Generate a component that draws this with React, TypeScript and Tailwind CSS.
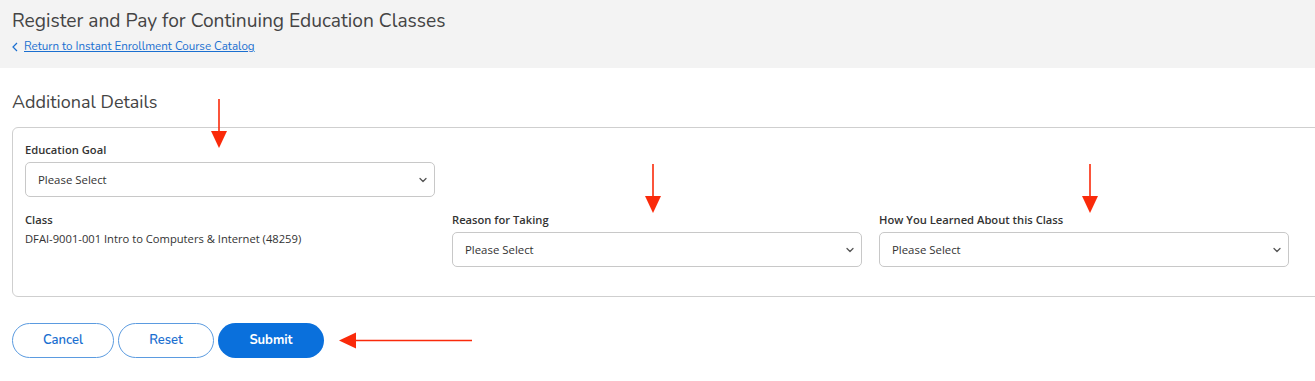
import React from 'react';

const heading = { fontFamily: '"Nunito", "Lato", "Open Sans", sans-serif' };

const Chevron: React.FC = () => (
  <svg className="w-[10px] h-[10px] text-[#555]" viewBox="0 0 10 10" fill="none" stroke="currentColor" strokeWidth={1.3}>
    <path d="M2 3.5l3 3 3-3" strokeLinecap="round" strokeLinejoin="round" />
  </svg>
);

const SelectBox: React.FC = () => (
  <div className="flex items-center justify-between w-[410px] h-[35px] border border-[#c8c8c8] rounded-[5px] bg-white pl-[12px] pr-[6px] text-[11.4px] text-[#333]">
    <span>Please Select</span>
    <Chevron />
  </div>
);

const Field: React.FC<{ label: string; children: React.ReactNode }> = ({ label, children }) => (
  <div className="flex flex-col w-[410px]">
    <label className="text-[11.2px] font-semibold text-[#333] leading-[16px] mb-[4px]">{label}</label>
    {children}
  </div>
);

const DownArrow: React.FC<{ className: string }> = ({ className }) => (
  <svg className={`absolute ${className}`} width="20" height="50" viewBox="0 0 20 50">
    <line x1="10" y1="0" x2="10" y2="36" stroke="#fa2a0a" strokeWidth="1.6" />
    <polygon points="2,32 18,32 10,49" fill="#fa2a0a" />
  </svg>
);

const App: React.FC = () => {
  return (
    <div className="relative w-[1315px] h-[381px] bg-white overflow-hidden" style={{ fontFamily: '"Open Sans", sans-serif' }}>
      <div className="bg-[#f3f3f3] h-[68px] px-[12px] pt-[8px]">
        <h1 className="text-[19.2px] leading-[26px] text-[#444]" style={heading}>
          Register and Pay for Continuing Education Classes
        </h1>
        <div className="flex items-center gap-[6px] mt-[5px]">
          <svg className="w-[6px] h-[10px] text-[#1a6fd0]" viewBox="0 0 6 10" fill="none" stroke="currentColor" strokeWidth={1.2}>
            <path d="M5 1L1 5l4 4" />
          </svg>
          <a href="#" className="text-[11.6px] leading-[15px] text-[#1a6fd0] underline" style={heading}>
            Return to Instant Enrollment Course Catalog
          </a>
        </div>
      </div>

      <div className="px-[12px]">
        <h2 className="text-[18px] leading-[24px] text-[#444] mt-[22px]" style={heading}>
          Additional Details
        </h2>
        <div className="mt-[13px] w-[1330px] h-[170px] border border-[#cfcfcf] rounded-[6px] px-[12px] pt-[14px]">
          <Field label="Education Goal">
            <SelectBox />
          </Field>
          <div className="flex gap-[17px] mt-[15px]">
            <div className="flex flex-col w-[410px]">
              <label className="text-[11.2px] font-semibold text-[#333] leading-[16px]">Class</label>
              <span className="text-[11.2px] text-[#333] leading-[16px] mt-[3px]">
                DFAI-9001-001 Intro to Computers &amp; Internet (48259)
              </span>
            </div>
            <Field label="Reason for Taking">
              <SelectBox />
            </Field>
            <Field label="How You Learned About this Class">
              <SelectBox />
            </Field>
          </div>
        </div>

        <div className="flex gap-[4px] mt-[26px]">
          <button className="w-[102px] h-[35px] rounded-full border border-[#5b9be0] text-[#1a6fd0] text-[13px] font-semibold" style={heading}>
            Cancel
          </button>
          <button className="w-[96px] h-[35px] rounded-full border border-[#5b9be0] text-[#1a6fd0] text-[13px] font-semibold" style={heading}>
            Reset
          </button>
          <button className="w-[106px] h-[35px] rounded-full bg-[#0a70dc] text-white text-[13px] font-bold" style={heading}>
            Submit
          </button>
        </div>
      </div>

      <DownArrow className="left-[209px] top-[99px]" />
      <DownArrow className="left-[643px] top-[164px]" />
      <DownArrow className="left-[1080px] top-[164px]" />
      <svg className="absolute left-[338px] top-[331px]" width="135" height="20" viewBox="0 0 135 20">
        <line x1="14" y1="9.5" x2="134" y2="9.5" stroke="#fa2a0a" strokeWidth="1.6" />
        <polygon points="1,9.5 18,1.5 18,17.5" fill="#fa2a0a" />
      </svg>
    </div>
  );
};

export default App;
